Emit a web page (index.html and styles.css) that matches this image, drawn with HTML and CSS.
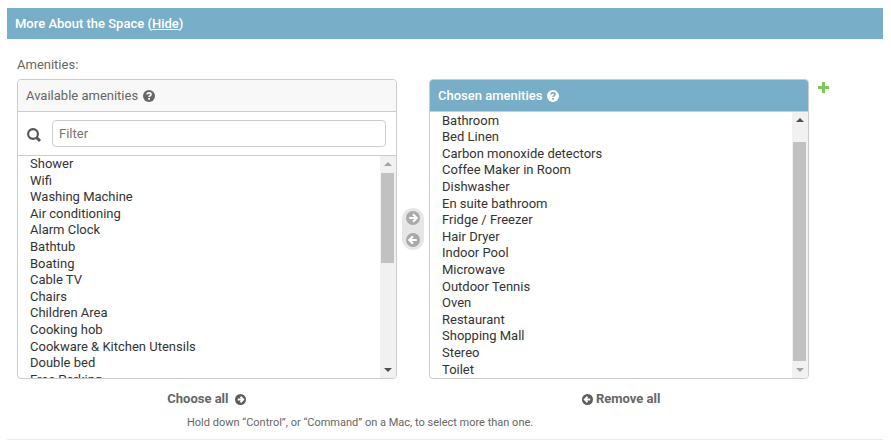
FILE: index.html
```html
<!DOCTYPE html>
<html lang="en">

<head>
  <meta charset="UTF-8" />
  <title>More About the Space</title>
  <link rel="stylesheet" href="styles.css">
</head>

<body>
  <div id="main">
    <h2 class="module-title">More About the Space (<a href="#">Hide</a>)</h2>

    <div class="form-row">
      <div class="field-label">Amenities:</div>

      <div class="selector">
        <div class="selector-col">
          <div class="selector-box">
            <h3 class="selector-head">Available amenities
              <svg class="help" viewBox="0 0 12 12"><circle cx="6" cy="6" r="6" fill="currentColor" /><path class="help-mark" d="M4.1 4.6c0-1.2.9-1.8 2-1.8s1.9.7 1.9 1.6c0 1.4-1.9 1.3-1.9 2.6" /><rect class="help-dot" x="5.1" y="8" width="1.9" height="1.7" /></svg>
            </h3>
            <div class="filter-row">
              <svg class="search-icon" viewBox="0 0 14 14"><circle cx="6" cy="6" r="4.9" /><path d="M9.6 9.6 13 13" /></svg>
              <input class="filter-input" type="text" placeholder="Filter" />
            </div>
            <div class="list-wrap list-short">
              <div class="list">
                <div>Shower</div>
                <div>Wifi</div>
                <div>Washing Machine</div>
                <div>Air conditioning</div>
                <div>Alarm Clock</div>
                <div>Bathtub</div>
                <div>Boating</div>
                <div>Cable TV</div>
                <div>Chairs</div>
                <div>Children Area</div>
                <div>Cooking hob</div>
                <div>Cookware &amp; Kitchen Utensils</div>
                <div>Double bed</div>
                <div>Free Parking</div>
              </div>
              <div class="scrollbar">
                <span class="arrow-up arrow-dim"></span>
                <span class="thumb thumb-left"></span>
                <span class="arrow-down"></span>
              </div>
            </div>
          </div>
          <a class="all-link" href="#">Choose all
            <svg class="round-icon icon-after" viewBox="0 0 12 12"><circle cx="6" cy="6" r="6" fill="currentColor" /><path class="arrow-mark" d="M6 3 9 6 6 9M3 6H8.5" /></svg>
          </a>
        </div>

        <div class="chooser">
          <svg class="chooser-icon" viewBox="0 0 14 14"><circle cx="7" cy="7" r="7" fill="currentColor" /><path class="arrow-mark" d="M7 3.2 10.8 7 7 10.8M3.2 7H10" /></svg>
          <svg class="chooser-icon" viewBox="0 0 14 14"><circle cx="7" cy="7" r="7" fill="currentColor" /><path class="arrow-mark" d="M7 3.2 3.2 7 7 10.8M10.8 7H4" /></svg>
        </div>

        <div class="selector-col">
          <div class="selector-box">
            <h3 class="selector-head head-chosen">Chosen amenities
              <svg class="help" viewBox="0 0 12 12"><circle cx="6" cy="6" r="6" fill="currentColor" /><path class="help-mark mark-blue" d="M4.1 4.6c0-1.2.9-1.8 2-1.8s1.9.7 1.9 1.6c0 1.4-1.9 1.3-1.9 2.6" /><rect class="help-dot dot-blue" x="5.1" y="8" width="1.9" height="1.7" /></svg>
            </h3>
            <div class="list-wrap list-tall">
              <div class="list list-right">
                <div>Bathroom</div>
                <div>Bed Linen</div>
                <div>Carbon monoxide detectors</div>
                <div>Coffee Maker in Room</div>
                <div>Dishwasher</div>
                <div>En suite bathroom</div>
                <div>Fridge / Freezer</div>
                <div>Hair Dryer</div>
                <div>Indoor Pool</div>
                <div>Microwave</div>
                <div>Outdoor Tennis</div>
                <div>Oven</div>
                <div>Restaurant</div>
                <div>Shopping Mall</div>
                <div>Stereo</div>
                <div>Toilet</div>
              </div>
              <div class="scrollbar">
                <span class="arrow-up"></span>
                <span class="thumb thumb-right"></span>
                <span class="arrow-down arrow-dim"></span>
              </div>
            </div>
          </div>
          <a class="all-link" href="#">
            <svg class="round-icon icon-before" viewBox="0 0 12 12"><circle cx="6" cy="6" r="6" fill="currentColor" /><path class="arrow-mark" d="M6 3 3 6 6 9M9 6H3.5" /></svg>
            Remove all
          </a>
        </div>

        <svg class="add-icon" viewBox="0 0 11 11"><path d="M4 0H7V4H11V7H7V11H4V7H0V4H4Z" /></svg>
      </div>

      <p class="help-text">Hold down “Control”, or “Command” on a Mac, to select more than one.</p>
    </div>
  </div>
</body>

</html>
```

FILE: styles.css
```css
body {
  font-family: Roboto, 'Liberation Sans', sans-serif;
  font-size: 13px;
  color: #333;
  background-color: white;
  margin: 0;
  padding: 0;
}

#main {
  margin: 8px 8px 0 7px;
  height: 432px;
  border-bottom: 1px solid #eaeaea;
  box-sizing: border-box;
}

.module-title {
  margin: 0;
  height: 31px;
  line-height: 31px;
  padding-left: 8px;
  font-size: 13px;
  font-weight: 500;
  color: white;
  background-color: #79aec8;
}

.module-title a {
  color: white;
}

.form-row {
  padding: 18px 10px 0;
}

.field-label {
  line-height: 16px;
  color: #666;
  margin-bottom: 6px;
}

.selector {
  display: flex;
  align-items: flex-start;
}

.selector-col {
  width: 380px;
}

.selector-box {
  border: 1px solid #ccc;
  border-radius: 4px;
  overflow: hidden;
  height: 300px;
  box-sizing: border-box;
}

.selector-head {
  margin: 0;
  height: 32px;
  line-height: 31px;
  padding-left: 8px;
  font-size: 13px;
  font-weight: 400;
  color: #666;
  background-color: #f8f8f8;
  border-bottom: 1px solid #ccc;
  box-sizing: border-box;
}

.head-chosen {
  color: white;
  font-weight: 500;
  background-color: #79aec8;
  border-bottom: 1px solid #ccc;
}

.help {
  width: 12px;
  height: 12px;
  margin-left: 2px;
  vertical-align: -2px;
}

.head-chosen .help {
  margin-left: 1px;
}

.help-mark {
  fill: none;
  stroke: white;
  stroke-width: 1.7;
}

.help-dot {
  fill: white;
}

.mark-blue {
  stroke: #79aec8;
}

.dot-blue {
  fill: #79aec8;
}

.filter-row {
  display: flex;
  align-items: center;
  gap: 11px;
  height: 44px;
  padding: 0 10px 0 9px;
  border-bottom: 1px solid #ccc;
  box-sizing: border-box;
}

.search-icon {
  width: 14px;
  height: 14px;
  flex: none;
  margin-top: 2px;
  fill: none;
  stroke: #555;
  stroke-width: 2.1;
}

.search-icon path {
  stroke-width: 2.8;
}

.filter-input {
  flex: 1;
  min-width: 0;
  height: 27px;
  border: 1px solid #ccc;
  border-radius: 4px;
  padding: 0 6px;
  font-family: inherit;
  font-size: 13px;
  box-sizing: border-box;
  outline: none;
}

.filter-input::placeholder {
  color: #757575;
}

.list-wrap {
  display: flex;
  overflow: hidden;
}

.list-short {
  height: 222px;
}

.list-tall {
  height: 266px;
}

.list {
  flex: 1;
  overflow: hidden;
  padding-left: 12px;
  color: #333;
  line-height: 16.6px;
}

.list-right {
  margin-top: 0.6px;
}

.scrollbar {
  width: 16px;
  flex: none;
  display: flex;
  flex-direction: column;
  align-items: center;
  padding-right: 1px;
  box-sizing: border-box;
  background-color: #f1f1f1;
}

.arrow-up,
.arrow-down {
  width: 0;
  height: 0;
  flex: none;
  border-left: 4px solid transparent;
  border-right: 4px solid transparent;
}

.arrow-up {
  margin-top: 6px;
  border-bottom: 4px solid #505050;
}

.arrow-down {
  margin-top: auto;
  margin-bottom: 6px;
  border-top: 4px solid #505050;
}

.arrow-up.arrow-dim {
  border-bottom-color: #a3a3a3;
}

.arrow-down.arrow-dim {
  border-top-color: #a3a3a3;
}

.thumb {
  width: 13px;
  flex: none;
  background-color: #c1c1c1;
}

.thumb-left {
  height: 90px;
  margin-top: 7px;
}

.thumb-right {
  height: 219px;
  margin-top: 20px;
}

.chooser {
  width: 22px;
  flex: none;
  margin: 129px 5px 0;
  padding: 3px 0;
  display: flex;
  flex-direction: column;
  align-items: center;
  gap: 8px;
  color: #a9a9a9;
  background-color: #e6e6e6;
  border-radius: 11px;
  box-sizing: border-box;
}

.chooser-icon {
  width: 14px;
  height: 14px;
}

.arrow-mark {
  fill: none;
  stroke: white;
  stroke-width: 2;
}

.all-link {
  display: block;
  margin-top: 12px;
  text-align: center;
  line-height: 16px;
  font-weight: 700;
  color: #666;
  text-decoration: none;
}

.round-icon {
  width: 11px;
  height: 11px;
  vertical-align: -2px;
  color: #5c5c5c;
}

.icon-after {
  margin: 0 1px 0 3px;
}

.icon-before {
  margin: 0 0 0 4px;
}

.add-icon {
  width: 11px;
  height: 11px;
  flex: none;
  margin: 3px 0 0 9px;
  fill: #7dc95e;
}

.help-text {
  margin: 9px 0 0;
  padding-left: 170px;
  font-size: 11px;
  line-height: 14px;
  color: #666;
}
```
